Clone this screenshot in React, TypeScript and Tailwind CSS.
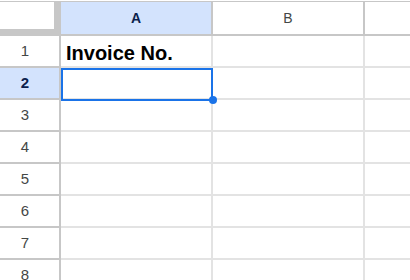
import React from 'react';

const rows = [1, 2, 3, 4, 5, 6, 7, 8];

export default function App() {
  return (
    <div
      className="relative w-[410px] h-[280px] overflow-hidden bg-white pt-px"
      style={{ fontFamily: '"Liberation Sans", Arial, sans-serif' }}
    >
      {/* column headers */}
      <div className="flex h-[35px] border-t border-[#c7c7c7]">
        <div className="w-[61px] shrink-0 border-r-[7px] border-b-[7px] border-[#c7c7c7] bg-white" />
        <div className="w-[152px] shrink-0 flex items-center justify-center bg-[#d3e3fd] border-r-2 border-b-2 border-[#c7c7c7] text-[14px] font-bold text-[#0b1f4d]">
          A
        </div>
        <div className="w-[152px] shrink-0 flex items-center justify-center border-r-2 border-b-2 border-[#c7c7c7] text-[14px] text-[#444746]">
          B
        </div>
        <div className="flex-1 border-b-2 border-[#c7c7c7]" />
      </div>

      {/* rows */}
      {rows.map((r) => {
        const selected = r === 2;
        return (
          <div key={r} className="flex h-[32px]">
            <div
              className={`w-[61px] shrink-0 flex items-center justify-center pr-[9px] border-r-2 border-b-2 border-[#c7c7c7] text-[15px] ${
                selected ? 'bg-[#d3e3fd] font-bold text-[#0b1f4d]' : 'text-[#444746]'
              }`}
            >
              {r}
            </div>
            <div className="w-[152px] shrink-0 flex items-end pl-[5px] pb-[3px] border-r-2 border-b-2 border-[#e3e3e3] text-[20px] leading-[20px] font-bold text-black">
              {r === 1 ? 'Invoice No.' : ''}
            </div>
            <div className="w-[152px] shrink-0 border-r-2 border-b-2 border-[#e3e3e3]" />
            <div className="flex-1 border-b-2 border-[#e3e3e3]" />
          </div>
        );
      })}

      {/* selection box on A2 */}
      <div className="absolute left-[61px] top-[68px] w-[152px] h-[33px] border-2 border-[#1a73e8]" />
      <div className="absolute left-[209px] top-[96px] w-[8px] h-[8px] rounded-full bg-[#1a73e8]" />
    </div>
  );
}
